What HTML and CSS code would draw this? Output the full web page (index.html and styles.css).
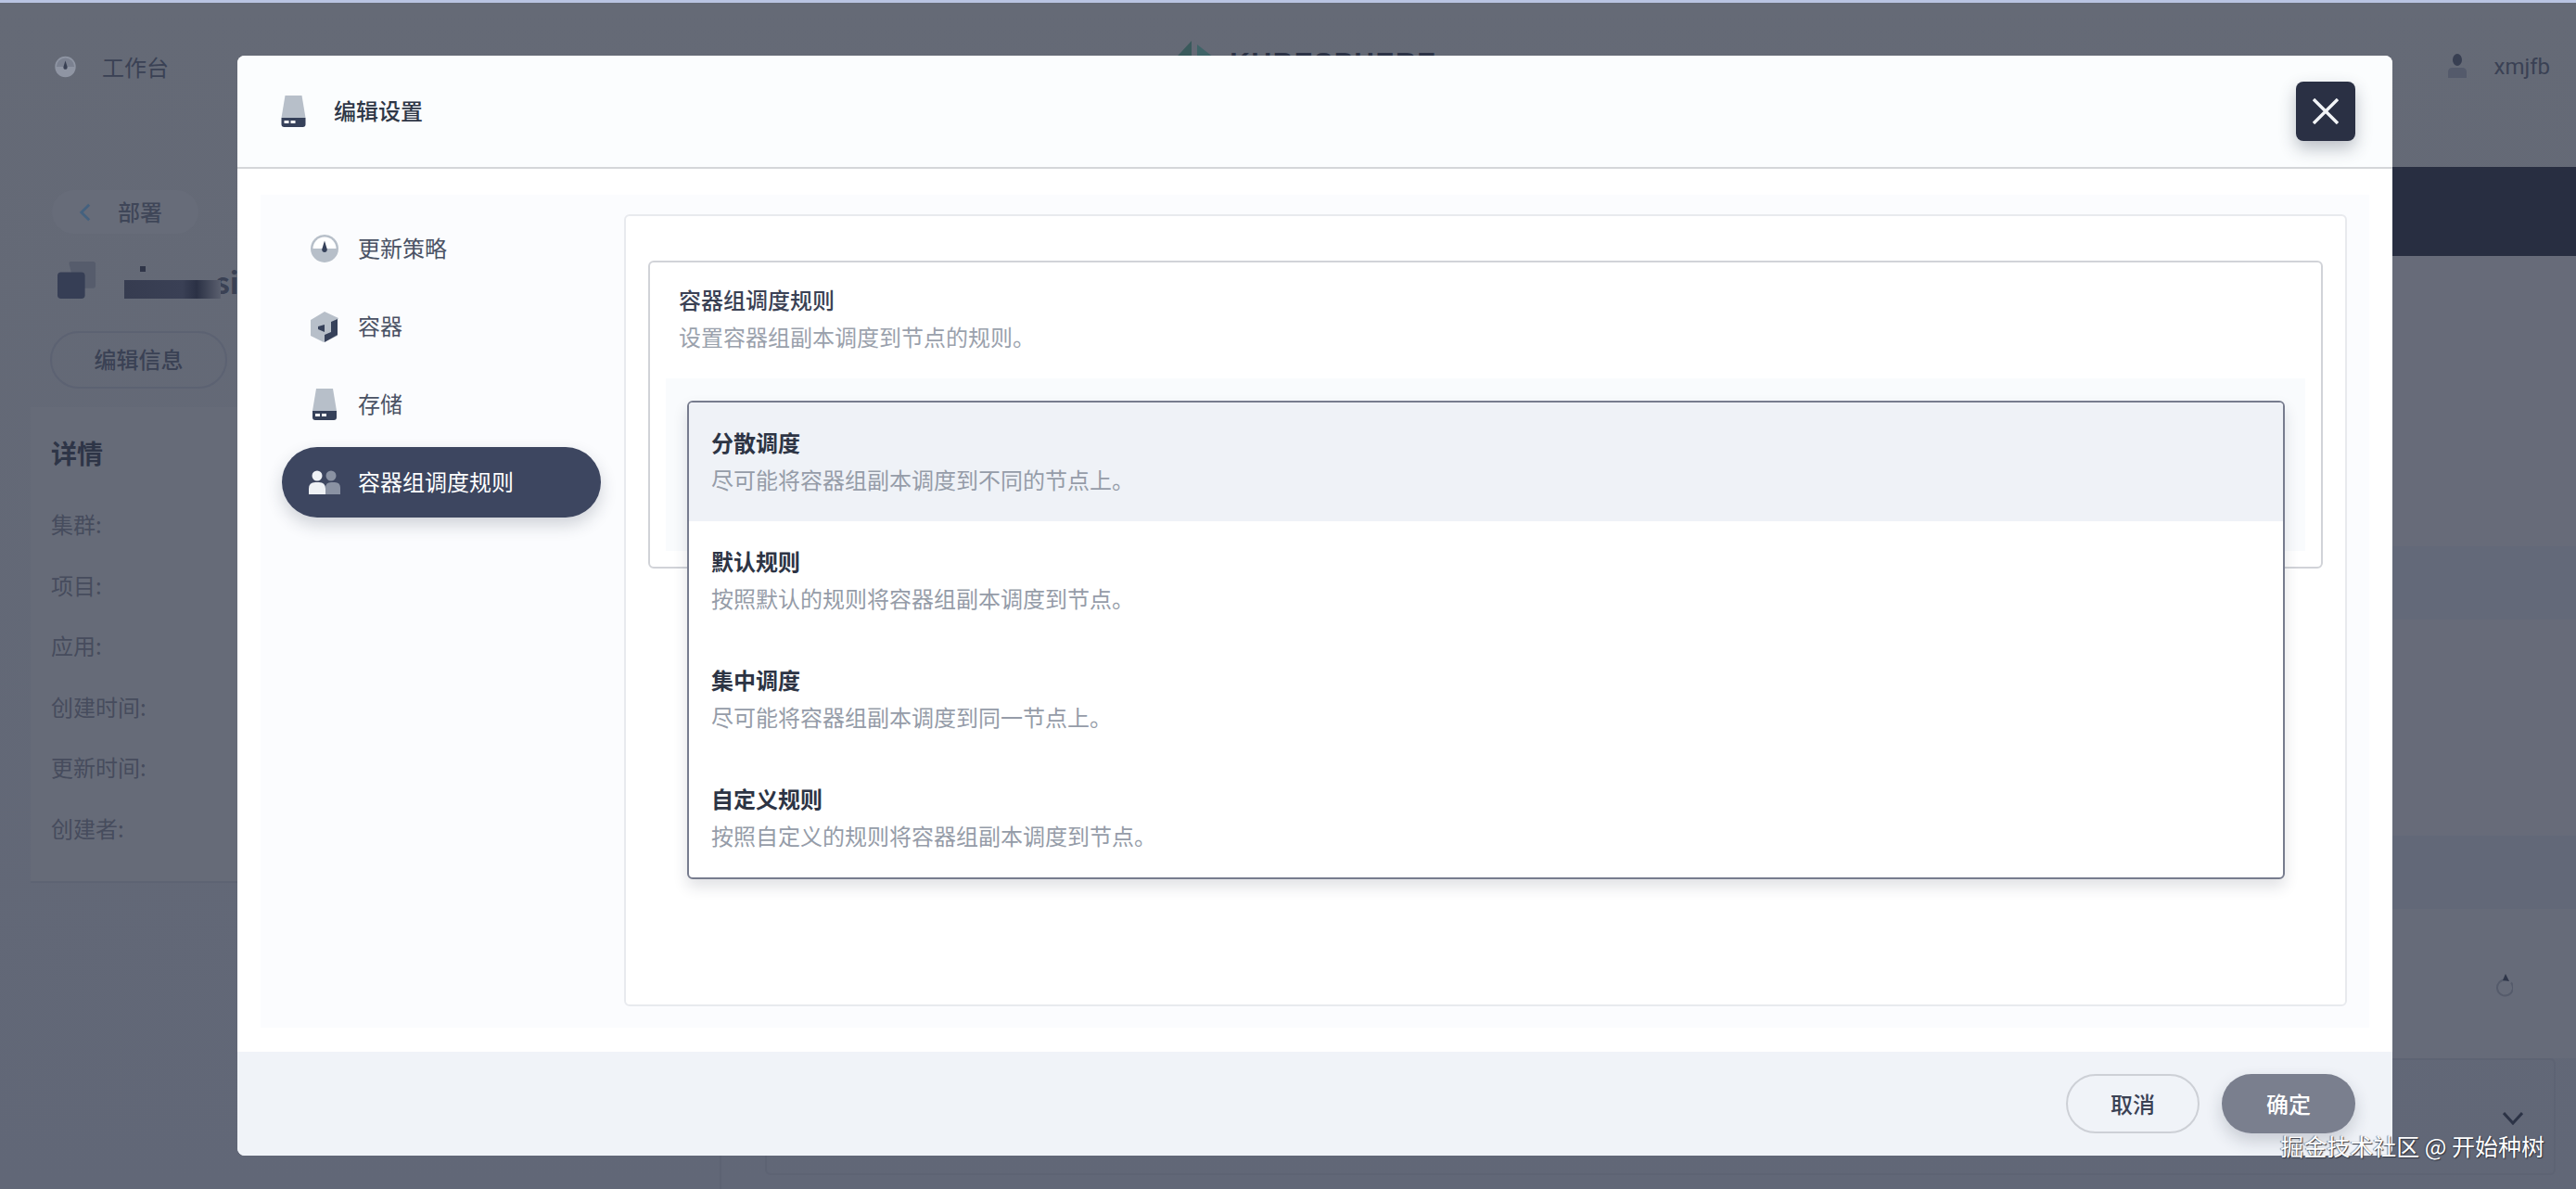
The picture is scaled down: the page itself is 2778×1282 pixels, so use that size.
FILE: index.html
```html
<!DOCTYPE html>
<html lang="zh-CN">
<head>
<meta charset="utf-8">
<title>编辑设置</title>
<link rel="stylesheet" href="styles.css">
</head>
<body>
<div class="page">
  <header class="topbar">
    <div class="top-left">
      <svg class="ic-top" viewBox="0 0 30 30"><circle cx="15" cy="15" r="14" fill="#8f95a3"/><path d="M3 15a12 12 0 0 1 24 0z" fill="#7b8190"/><path d="M15 7l2.6 8a2.7 2.7 0 1 1-5.2 0z" fill="#3a4154"/></svg>
      <span>工作台</span>
    </div>
    <div class="logo">
      <svg class="logo-mark" viewBox="0 0 48 40"><path d="M24 0v26H0z" fill="#3a5a5c"/><path d="M30 4l18 14-18 8z" fill="#3f6468"/></svg>
      <span class="logo-text">KUBESPHERE</span>
    </div>
    <div class="top-right">
      <svg class="ic-user" viewBox="0 0 20 26"><ellipse cx="10" cy="6.5" rx="5" ry="6.5" fill="#383f52"/><path d="M0 26v-6q0-5 5-5h10q5 0 5 5v6z" fill="#545a6b"/></svg>
      <span>xmjfb</span>
    </div>
  </header>
  <div class="main">
    <aside class="side">
      <div class="back"><svg class="back-ic" viewBox="0 0 14 22"><path d="M12 2L3 11l9 9" fill="none" stroke="#44617f" stroke-width="3"/></svg><span>部署</span></div>
      <div class="name-row">
        <svg class="name-ic" viewBox="0 0 44 44"><path d="M13 2q0-2 2-2h25q3 0 3 3v24q0 3-3 3H20z" fill="#565c6c"/><rect x="0" y="12" width="31" height="30" rx="4" fill="#363e55"/></svg>
        <div class="redact"><i class="redact-dot"></i></div><b class="name-end">si</b>
      </div>
      <div class="edit-btn">编辑信息</div>
      <section class="detail">
        <h3>详情</h3>
        <p>集群:</p><p>项目:</p><p>应用:</p><p>创建时间:</p><p>更新时间:</p><p>创建者:</p>
      </section>
    </aside>
    <div class="content">
      <div class="banner"></div>
      <div class="band-a"></div>
      <div class="band-b"></div>
      <div class="band-a short"></div>
      <div class="band-b tall">
        <svg class="refresh" viewBox="0 0 22 24"><path d="M14 6.5a8.5 8.5 0 1 0 6 3" fill="none" stroke="#555b6b" stroke-width="2"/><path d="M14 0l4 8-7-1z" fill="#2f364a"/></svg>
      </div>
      <div class="lower-box"><svg class="chev" viewBox="0 0 22 14"><path d="M1 1l10 11L21 1" fill="none" stroke="#2c3346" stroke-width="3"/></svg></div>
    </div>
  </div>
</div>

<div class="modal">
  <div class="modal-head">
    <svg class="ic-disk" viewBox="0 0 26 34"><path d="M4 0h18l4 24H0z" fill="#b7bfc9"/><path d="M0 24h26v7q0 3-3 3H3q-3 0-3-3z" fill="#36415a"/><rect x="3" y="27" width="5" height="3" fill="#fff"/><rect x="10" y="27" width="5" height="3" fill="#fff"/></svg>
    <span>编辑设置</span>
    <button class="close"><svg viewBox="0 0 28 28"><path d="M1 1l26 26M27 1L1 27" stroke="#f2f4f7" stroke-width="3.4" fill="none"/></svg></button>
  </div>
  <div class="modal-body">
    <div class="panel">
      <nav class="nav">
        <div class="nav-item">
          <svg class="ic-nav" viewBox="0 0 30 30"><circle cx="15" cy="15" r="15" fill="#b7bfc9"/><path d="M2.5 15a12.5 12.5 0 0 1 25 0z" fill="#fff"/><path d="M15 6.5l2.7 9a2.8 2.8 0 1 1-5.4 0z" fill="#36415a"/></svg>
          <span>更新策略</span>
        </div>
        <div class="nav-item">
          <svg class="ic-nav ic-tall" viewBox="0 0 30 33"><path d="M15 0l15 7-1 2v17l-15 7-14-7V9z" fill="#b7bfc9"/><path d="M22 11l7-3v17l-14 8v-8l7-3z" fill="#36415a"/><path d="M15 14v8l-7-3v-3z" fill="#36415a"/></svg>
          <span>容器</span>
        </div>
        <div class="nav-item">
          <svg class="ic-nav ic-disk-nav" viewBox="0 0 26 34"><path d="M4 0h18l4 24H0z" fill="#b7bfc9"/><path d="M0 24h26v7q0 3-3 3H3q-3 0-3-3z" fill="#36415a"/><rect x="3" y="27" width="5" height="3" fill="#fff"/><rect x="10" y="27" width="5" height="3" fill="#fff"/></svg>
          <span>存储</span>
        </div>
        <div class="nav-item active">
          <svg class="ic-nav ic-people" viewBox="0 0 34 26"><circle cx="24" cy="6" r="5.5" fill="#8a92a3"/><path d="M18 26v-7q0-6 6-6h4q6 0 6 6v7z" fill="#8a92a3"/><circle cx="9" cy="6" r="5.5" fill="#eef1f5"/><path d="M0 26v-6q0-7 7-7h4q7 0 7 7v6z" fill="#eef1f5"/></svg>
          <span>容器组调度规则</span>
        </div>
      </nav>
      <div class="card">
        <div class="rule-box">
          <div class="rule-title">容器组调度规则</div>
          <div class="rule-desc">设置容器组副本调度到节点的规则。</div>
          <div class="select-well"></div>
          <div class="dropdown">
            <div class="option selected"><div class="opt-title">分散调度</div><div class="opt-desc">尽可能将容器组副本调度到不同的节点上。</div></div>
            <div class="option"><div class="opt-title">默认规则</div><div class="opt-desc">按照默认的规则将容器组副本调度到节点。</div></div>
            <div class="option"><div class="opt-title">集中调度</div><div class="opt-desc">尽可能将容器组副本调度到同一节点上。</div></div>
            <div class="option"><div class="opt-title">自定义规则</div><div class="opt-desc">按照自定义的规则将容器组副本调度到节点。</div></div>
          </div>
        </div>
      </div>
    </div>
  </div>
  <div class="modal-foot">
    <button class="btn btn-cancel">取消</button>
    <button class="btn btn-ok">确定</button>
  </div>
</div>
<div class="watermark">掘金技术社区 @ 开始种树</div>
</body>
</html>
```
FILE: styles.css
```css
* { box-sizing: border-box; }
html, body { margin: 0; padding: 0; }
body {
  width: 2778px;
  height: 1282px;
  overflow: hidden;
  position: relative;
  font-family: "Noto Sans CJK SC", "Noto Sans", sans-serif;
  font-size: 24px;
  color: #3a4154;
  background: #646976;
}
.page {
  width: 100%;
  height: 100%;
  display: flex;
  flex-direction: column;
  border-top: 3px solid #b9c4e2;
  background: linear-gradient(#656a76, #616777);
}
.topbar {
  height: 177px;
  flex: none;
  display: grid;
  grid-template-columns: 1fr auto 1fr;
  padding: 40px 28px 0 58px;
  align-items: start;
}
.top-left { display: flex; align-items: center; gap: 27px; height: 60px; margin-top: -1px; line-height: 60px; color: #3a4154; }
.ic-top { width: 25px; height: 24px; }
.logo { display: flex; gap: 17px; align-items: flex-start; margin-left: 3px; }
.logo-mark { width: 48px; height: 40px; margin-top: 1px; }
.logo-text { font-family: "Liberation Sans", sans-serif; font-size: 30px; font-weight: 700; letter-spacing: 1.5px; color: #2c3346; line-height: 30px; margin-top: 9px; }
.top-right { display: flex; justify-content: flex-end; align-items: center; gap: 29px; height: 60px; margin-top: -1px; font-family: "Roboto", sans-serif; font-size: 24px; color: #3a4154; }
.ic-user { width: 20px; height: 26px; margin-top: -2px; }

.main { flex: 1; display: flex; min-height: 0; }
.side { width: 778px; flex: none; border-right: 2px solid #5d6373; padding-left: 33px; display: flex; flex-direction: column; }
.back { margin: 25px 0 0 23px; width: 158px; height: 47px; border-radius: 24px; background: #676c79; display: flex; align-items: center; gap: 29px; padding-left: 29px; flex: none; color: #3f4658; font-weight: 500; }
.back span { margin-top: -2px; }
.back-ic { width: 13px; height: 22px; }
.name-row { margin: 30px 0 0 28px; height: 42px; display: flex; align-items: flex-start; flex: none; }
.name-ic { width: 44px; height: 42px; flex: none; }
.redact { position: relative; width: 104px; height: 20px; margin: 20px 0 0 29px; background: linear-gradient(90deg, #363c50, #3a4055 60%, #2b3145 75%, #5a5f6e); flex: none; }
.redact-dot { position: absolute; left: 17px; top: -15px; width: 6px; height: 6px; background: #2f3548; }
.name-end { font-size: 32px; line-height: 42px; color: #3a4154; margin-left: -6px; }
.edit-btn { margin: 33px 0 0 21px; width: 191px; height: 62px; padding-bottom: 3px; border: 2px solid #5c6272; border-radius: 31px; display: flex; align-items: center; justify-content: center; flex: none; color: #3a4154; font-weight: 500; }
.detail { margin: 20px 0 0 0; padding: 24px 22px 0; height: 513px; background: #666b78; border-bottom: 2px solid #5d6373; flex: none; }
.detail h3 { margin: 0 0 32px; font-size: 28px; line-height: 50px; font-weight: 700; color: #2e3547; }
.detail p { margin: 0 0 25.5px; line-height: 40px; color: #464c5d; }

.content { flex: 1; display: flex; flex-direction: column; min-width: 0; }
.banner { height: 96px; background: #282e41; flex: none; }
.band-a { height: 313px; background: #676b79; flex: none; }
.band-b { height: 79px; background: #636979; flex: none; }
.band-a.short { height: 233px; }
.band-b.tall { height: 240px; background: linear-gradient(#626878 0 33%, #666b79 33%); display: flex; justify-content: flex-end; align-items: flex-end; padding: 0 68px 66px 0; }
.refresh { width: 22px; height: 26px; }
.lower-box { position: relative; margin-left: 47px; width: 1931px; height: 126px; border: 2px solid #5d6373; border-radius: 6px; display: flex; justify-content: flex-end; padding: 56px 33px 0 0; flex: none; }
.chev { width: 22px; height: 14px; }

.modal {
  position: absolute;
  left: 256px;
  top: 60px;
  width: 2324px;
  height: 1186px;
  background: #fff;
  border-radius: 8px;
  display: flex;
  flex-direction: column;
  overflow: hidden;
}
.modal-head {
  height: 122px;
  flex: none;
  background: #fbfdfe;
  border-bottom: 2px solid #d4d6d9;
  display: flex;
  align-items: center;
  padding: 0 40px 0 47px;
  font-weight: 500;
  color: #2f3747;
}
.ic-disk { width: 27px; height: 34px; margin: 0 30px 0 0; flex: none; }
.modal-head span { flex: 1; margin-top: -4px; }
.close {
  width: 64px;
  height: 64px;
  padding: 0;
  border: 0;
  border-radius: 8px;
  background: #2a3044;
  box-shadow: 0 8px 18px rgba(36, 46, 66, .3);
  display: flex;
  align-items: center;
  justify-content: center;
}
.close svg { width: 28px; height: 28px; }
.modal-body { flex: 1; min-height: 0; padding: 28px 25px 26px; }
.panel { height: 100%; background: #fbfcfe; display: flex; padding: 21px 24px 23px 0; }
.nav { width: 392px; flex: none; padding: 0 25px 0 23px; display: flex; flex-direction: column; gap: 8px; }
.nav-item { height: 76px; display: flex; align-items: center; color: #4a5264; border-radius: 38px; padding-left: 29px; flex: none; margin-top: 0; }
.nav-item:first-child { margin-top: -1px; }
.nav-item span { margin: -3px 0 0 21px; }
.ic-nav { width: 30px; height: 30px; flex: none; margin-left: 2px; }
.ic-tall { height: 33px; }
.ic-disk-nav { width: 26px; height: 34px; margin: 0 2px 0 4px; }
.ic-people { width: 34px; height: 26px; margin: 0 -2px 0 0; }
.nav-item.active { background: #3d4660; color: #fff; box-shadow: 0 8px 18px rgba(36, 46, 66, .2); }
.card { flex: 1; background: #fff; border: 2px solid #e8eaee; border-radius: 6px; padding: 48px 24px 0; min-width: 0; }
.rule-box { position: relative; height: 332px; border: 2px solid #d1d3d8; border-radius: 6px; padding: 20px 31px 0; }
.rule-title { line-height: 40px; font-weight: 500; color: #3a4154; }
.rule-desc { line-height: 40px; color: #9aa1ac; }
.select-well { position: absolute; left: 17px; right: 17px; top: 125px; bottom: 17px; background: #f9fbfd; }
.dropdown {
  position: absolute;
  left: 40px;
  top: 149px;
  width: 1723px;
  height: 516px;
  background: #fff;
  border: 2px solid #777c8e;
  border-radius: 6px;
  box-shadow: 0 8px 16px rgba(36, 46, 66, .14);
  overflow: hidden;
}
.option { height: 128px; padding: 23px 24px 0; }
.option.selected { background: #eff2f7; }
.opt-title { line-height: 40px; font-weight: 700; color: #2d3444; }
.opt-desc { line-height: 40px; color: #959ca8; }
.modal-foot { height: 112px; flex: none; background: #f0f3f8; display: flex; justify-content: flex-end; align-items: flex-start; gap: 24px; padding: 24px 40px 0 0; }
.btn { width: 144px; height: 64px; border-radius: 32px; font-family: inherit; font-size: 24px; font-weight: 500; padding: 0 0 2px; }
.btn-cancel { background: transparent; border: 2px solid #cdd0d6; color: #3a4154; }
.btn-ok { background: #7a7f8e; border: 0; color: #fff; box-shadow: 0 8px 18px rgba(36, 46, 66, .2); }
.watermark {
  position: absolute;
  right: 34px;
  top: 1217px;
  line-height: 36px;
  font-size: 25px;
  color: #fff;
  text-shadow: 1px 1px 1px #30343f, -1px 0 1px rgba(48, 52, 63, .6);
  white-space: nowrap;
}
```
